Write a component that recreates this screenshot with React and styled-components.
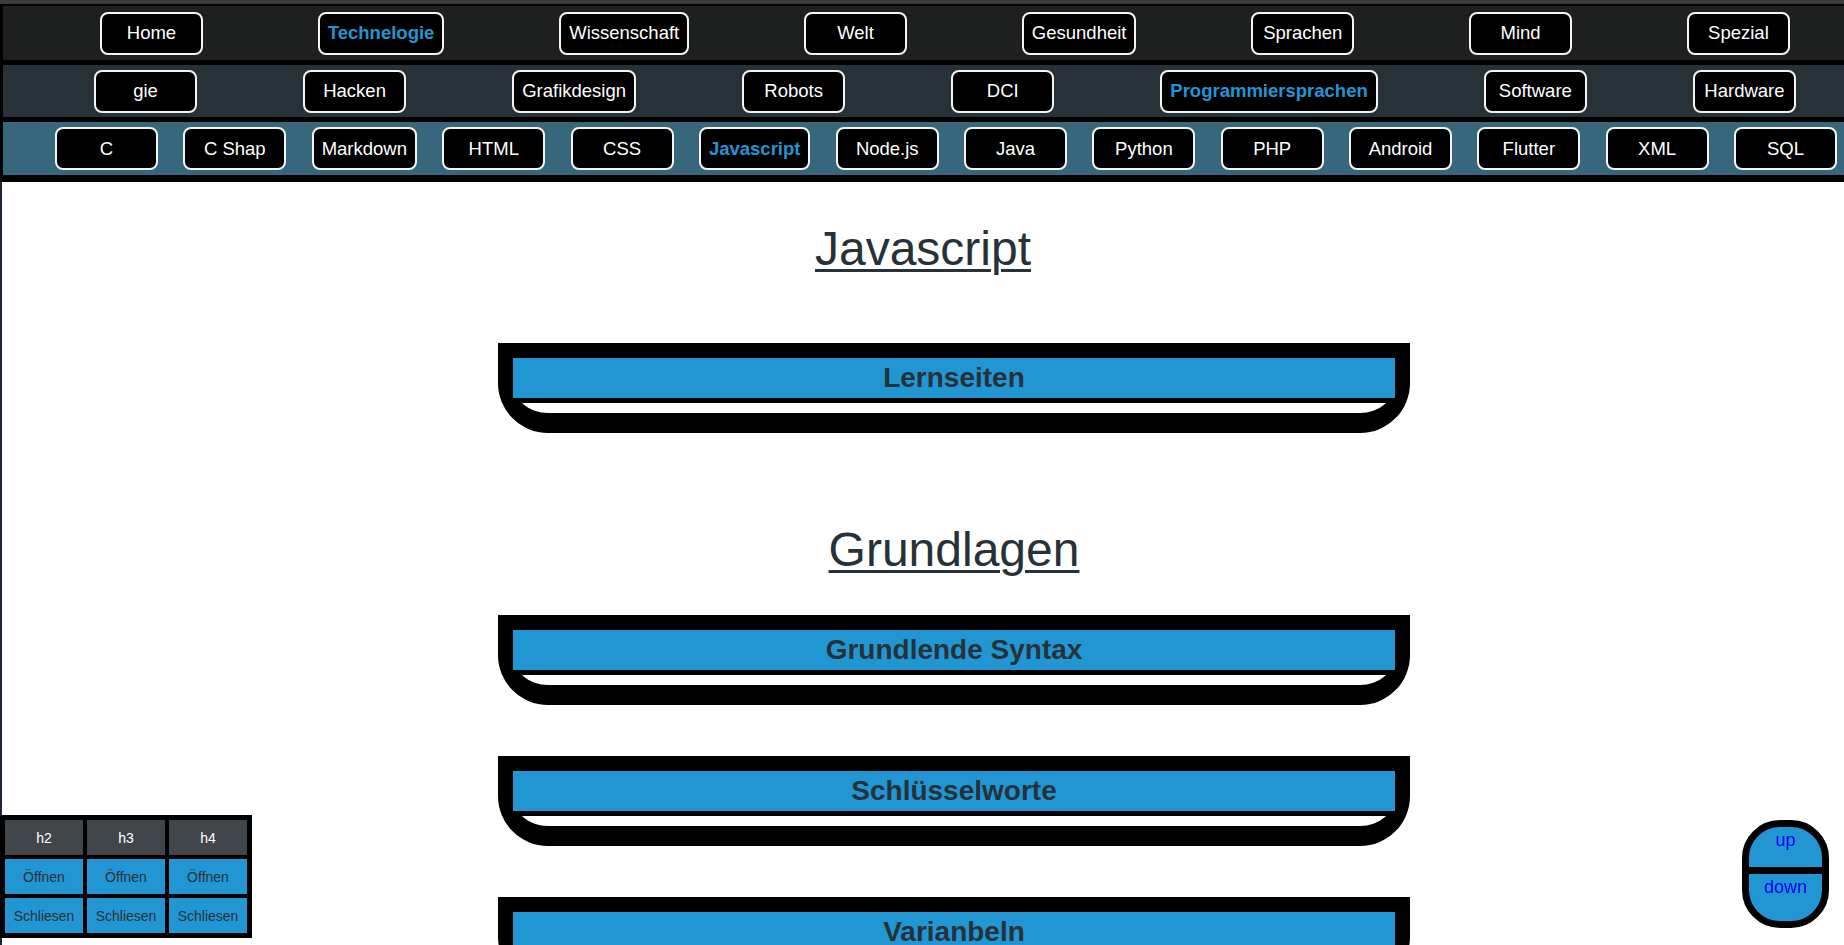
import React from 'react';
import styled, { createGlobalStyle } from 'styled-components';

const GlobalStyle = createGlobalStyle`
    html, body {
        margin: 0;
        padding: 0;
        background-color: #1c2636;
        font-family: "Liberation Sans", Arial, sans-serif;
        overflow: hidden;
    }
`;

const Page = styled.div`
    margin-left: 2px;
    min-height: 945px;
    background-color: #ffffff;
`;

const Header = styled.header`
    display: flex;
    flex-direction: column;
    gap: 5px;
    background-color: #000000;
    border-top: 4px solid #3c3c3c;
    margin-left: -2px;
    padding: 2px 0 7px 3px;
`;

const NavRow = styled.nav`
    display: flex;
    align-items: center;
    justify-content: space-between;
    height: ${p => p.$height}px;
    padding: 0 ${p => p.$right}px 0 ${p => p.$left}px;
    background-color: ${p => p.$bg};
`;

const NavButton = styled.a`
    box-sizing: border-box;
    display: flex;
    align-items: center;
    justify-content: center;
    min-width: 103px;
    height: 43px;
    padding: 0 8px;
    border: 2px solid #f4f4f4;
    border-radius: 8px;
    background-color: #000000;
    color: ${p => (p.$active ? '#2196d3' : '#ffffff')};
    font-size: 18.5px;
    font-weight: ${p => (p.$active ? 'bold' : 'normal')};
    white-space: nowrap;
    cursor: pointer;
`;

const Main = styled.main`
    display: flex;
    flex-direction: column;
    align-items: center;
`;

const Title = styled.h1`
    margin: ${p => p.$top}px 0 ${p => p.$bottom}px;
    font-size: 48px;
    font-weight: normal;
    line-height: normal;
    color: #263238;
    text-align: center;
    text-decoration: underline;
    text-decoration-thickness: 3px;
    text-underline-offset: 4px;
`;

const Section = styled.div`
    display: flex;
    flex-direction: column;
    align-items: center;
    margin-left: 62px;
`;

const CardList = styled.div`
    display: flex;
    flex-direction: column;
    gap: 51px;
`;

const Card = styled.section`
    box-sizing: border-box;
    width: 912px;
    border: 15px solid #000000;
    border-bottom-width: 20px;
    border-radius: 0 0 50px 50px;
    background-color: #ffffff;
`;

const CardHead = styled.h3`
    margin: 0;
    height: 40px;
    line-height: 40px;
    background-color: #2196d3;
    border-bottom: 5px solid #000000;
    color: #263238;
    font-size: 28px;
    font-weight: bold;
    text-align: center;
`;

const CardBody = styled.div`
    height: 10px;
`;

const ToolPanel = styled.div`
    position: fixed;
    left: 0;
    bottom: 7px;
    display: grid;
    grid-template-columns: repeat(3, 78px);
    grid-auto-rows: 35px;
    gap: 4px;
    padding: 5px;
    background-color: #000000;
`;

const ToolCell = styled.button`
    border: none;
    margin: 0;
    padding: 0;
    font-family: "Liberation Sans", Arial, sans-serif;
    font-size: 14px;
    background-color: ${p => (p.$head ? '#41464b' : '#2196d3')};
    color: ${p => (p.$head ? '#ffffff' : '#263238')};
    cursor: pointer;
`;

const Scroller = styled.div`
    position: fixed;
    right: 15px;
    bottom: 17px;
    box-sizing: border-box;
    width: 87px;
    height: 108px;
    display: flex;
    flex-direction: column;
    border: 7px solid #000000;
    border-radius: 38px;
    overflow: hidden;
    background-color: #2196d3;
`;

const ScrollLink = styled.a`
    display: block;
    height: ${p => p.$height}px;
    padding-top: 3px;
    box-sizing: border-box;
    text-align: center;
    color: #0000ee;
    font-size: 18px;
    border-bottom: ${p => (p.$split ? '7px solid #000000' : 'none')};
    cursor: pointer;
`;

const row1 = ['Home', 'Technelogie', 'Wissenschaft', 'Welt', 'Gesundheit', 'Sprachen', 'Mind', 'Spezial'];
const row2 = ['gie', 'Hacken', 'Grafikdesign', 'Robots', 'DCI', 'Programmiersprachen', 'Software', 'Hardware'];
const row3 = ['C', 'C Shap', 'Markdown', 'HTML', 'CSS', 'Javascript', 'Node.js', 'Java', 'Python', 'PHP', 'Android', 'Flutter', 'XML', 'SQL'];

const grundlagen = ['Grundlende Syntax', 'Schlüsselworte', 'Varianbeln', 'Datentypen'];

const App = () => {
    return (
        <Page>
            <GlobalStyle />
            <Header>
                <NavRow $bg="#1e2020" $height={54} $left={97} $right={54}>
                    {row1.map(t => (
                        <NavButton key={t} $active={t === 'Technelogie'}>{t}</NavButton>
                    ))}
                </NavRow>
                <NavRow $bg="#263238" $height={52} $left={91} $right={48}>
                    {row2.map(t => (
                        <NavButton key={t} $active={t === 'Programmiersprachen'}>{t}</NavButton>
                    ))}
                </NavRow>
                <NavRow $bg="#37677d" $height={53} $left={52} $right={7}>
                    {row3.map(t => (
                        <NavButton key={t} $active={t === 'Javascript'}>{t}</NavButton>
                    ))}
                </NavRow>
            </Header>
            <Main>
                <Title $top={39} $bottom={67}>Javascript</Title>
                <Section>
                    <CardList>
                        <Card>
                            <CardHead>Lernseiten</CardHead>
                            <CardBody />
                        </Card>
                    </CardList>
                    <Title $top={89} $bottom={38}>Grundlagen</Title>
                    <CardList>
                        {grundlagen.map(t => (
                            <Card key={t}>
                                <CardHead>{t}</CardHead>
                                <CardBody />
                            </Card>
                        ))}
                    </CardList>
                </Section>
            </Main>
            <ToolPanel>
                <ToolCell $head>h2</ToolCell>
                <ToolCell $head>h3</ToolCell>
                <ToolCell $head>h4</ToolCell>
                <ToolCell>Öffnen</ToolCell>
                <ToolCell>Öffnen</ToolCell>
                <ToolCell>Öffnen</ToolCell>
                <ToolCell>Schliesen</ToolCell>
                <ToolCell>Schliesen</ToolCell>
                <ToolCell>Schliesen</ToolCell>
            </ToolPanel>
            <Scroller>
                <ScrollLink $height={47} $split>up</ScrollLink>
                <ScrollLink $height={47}>down</ScrollLink>
            </Scroller>
        </Page>
    );
}

export default App
